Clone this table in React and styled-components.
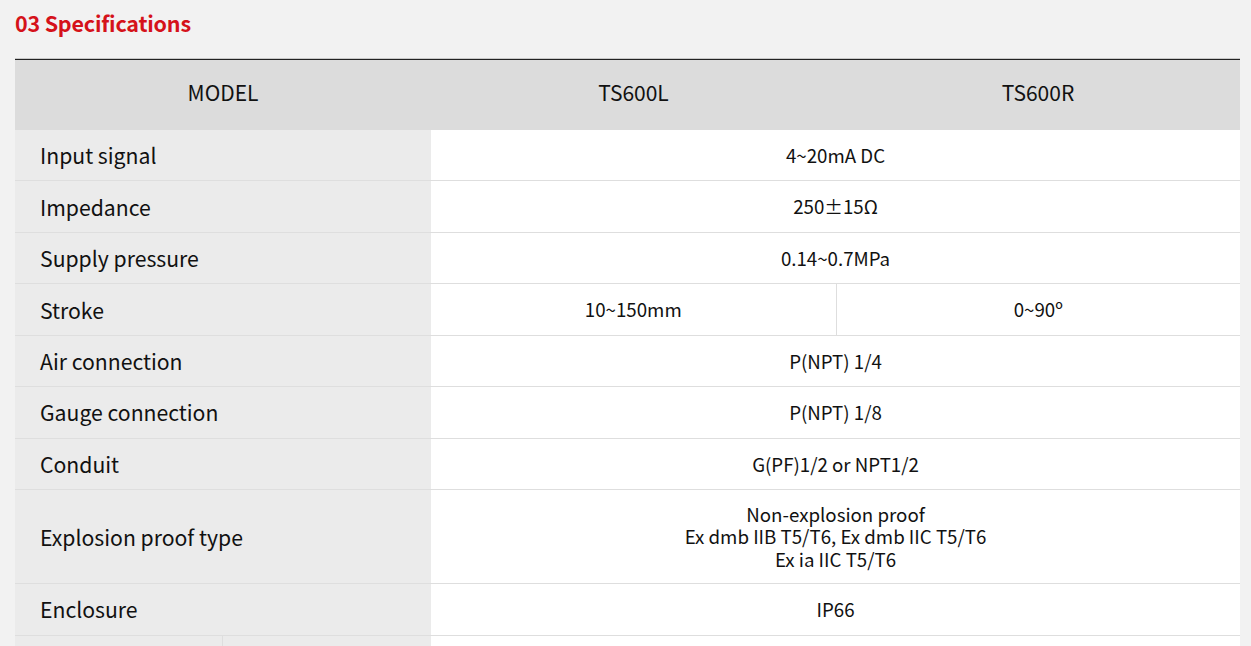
import React from "react";
import styled, { createGlobalStyle } from "styled-components";

const Global = createGlobalStyle`
  html, body { margin: 0; padding: 0; background: #f2f2f2; }
  body { font-family: "Noto Sans CJK KR", "Noto Sans", sans-serif; color: #111; overflow: hidden; }
`;

const Page = styled.div`
  padding: 7px 11px 0 15px;
`;

const Title = styled.h2`
  margin: 0;
  font-size: 21.5px;
  line-height: 32px;
  font-weight: 700;
  color: #d5121a;
  letter-spacing: -0.2px;
`;

const Table = styled.table`
  margin-top: 20px;
  width: 1225px;
  table-layout: fixed;
  border-collapse: collapse;
  border-top: 1px solid #222;
  box-shadow: 0 -1px 0 #c8c8c8;
`;

const HeadCell = styled.th`
  box-sizing: border-box;
  height: 70px;
  padding: 0 0 5px;
  background: #dcdcdc;
  font-weight: 400;
  font-size: 21px;
  color: #111;
  text-align: center;
  vertical-align: middle;
`;

const Row = styled.tr`
  border-bottom: 1px solid #dedede;
`;

const Label = styled.td`
  box-sizing: border-box;
  height: 51.45px;
  padding: 12px 25px;
  background: #ebebeb;
  font-size: 21.2px;
  line-height: 24px;
  color: #111;
  text-align: left;
  vertical-align: middle;
  border-left: ${(p) => (p.$divided ? "1px solid #dedede" : "none")};
`;

const Value = styled.td`
  box-sizing: border-box;
  height: 51.45px;
  padding: 12.8px 10px;
  background: #fff;
  font-size: 18.7px;
  line-height: 22.5px;
  color: #111;
  text-align: center;
  vertical-align: middle;
  border-left: ${(p) => (p.$divided ? "1px solid #dedede" : "none")};
`;

const rows = [
  ["Input signal", ["4~20mA DC"]],
  ["Impedance", ["250±15Ω"]],
  ["Supply pressure", ["0.14~0.7MPa"]],
  ["Stroke", ["10~150mm", "0~90º"]],
  ["Air connection", ["P(NPT) 1/4"]],
  ["Gauge connection", ["P(NPT) 1/8"]],
  ["Conduit", ["G(PF)1/2 or NPT1/2"]],
  [
    "Explosion proof type",
    [["Non-explosion proof", "Ex dmb IIB T5/T6, Ex dmb IIC T5/T6", "Ex ia IIC T5/T6"]],
  ],
  ["Enclosure", ["IP66"]],
];

function renderValue(v) {
  if (Array.isArray(v)) {
    return v.map((line, i) => (
      <React.Fragment key={i}>
        {i > 0 && <br />}
        {line}
      </React.Fragment>
    ));
  }
  return v;
}

export default function App() {
  return (
    <>
      <Global />
      <Page>
        <Title>03 Specifications</Title>
        <Table>
          <colgroup>
            <col style={{ width: 207 }} />
            <col style={{ width: 209 }} />
            <col style={{ width: 405 }} />
            <col style={{ width: 404 }} />
          </colgroup>
          <thead>
            <tr>
              <HeadCell colSpan={2}>MODEL</HeadCell>
              <HeadCell>TS600L</HeadCell>
              <HeadCell>TS600R</HeadCell>
            </tr>
          </thead>
          <tbody>
            {rows.map(([label, values]) => (
              <Row key={label}>
                <Label colSpan={2}>{label}</Label>
                {values.length === 1 ? (
                  <Value colSpan={2}>{renderValue(values[0])}</Value>
                ) : (
                  values.map((v, i) => (
                    <Value key={i} $divided={i > 0}>
                      {v}
                    </Value>
                  ))
                )}
              </Row>
            ))}
            <Row>
              <Label rowSpan={2}></Label>
              <Label $divided></Label>
              <Value colSpan={2}></Value>
            </Row>
            <Row>
              <Label $divided></Label>
              <Value colSpan={2}></Value>
            </Row>
          </tbody>
        </Table>
      </Page>
    </>
  );
}
